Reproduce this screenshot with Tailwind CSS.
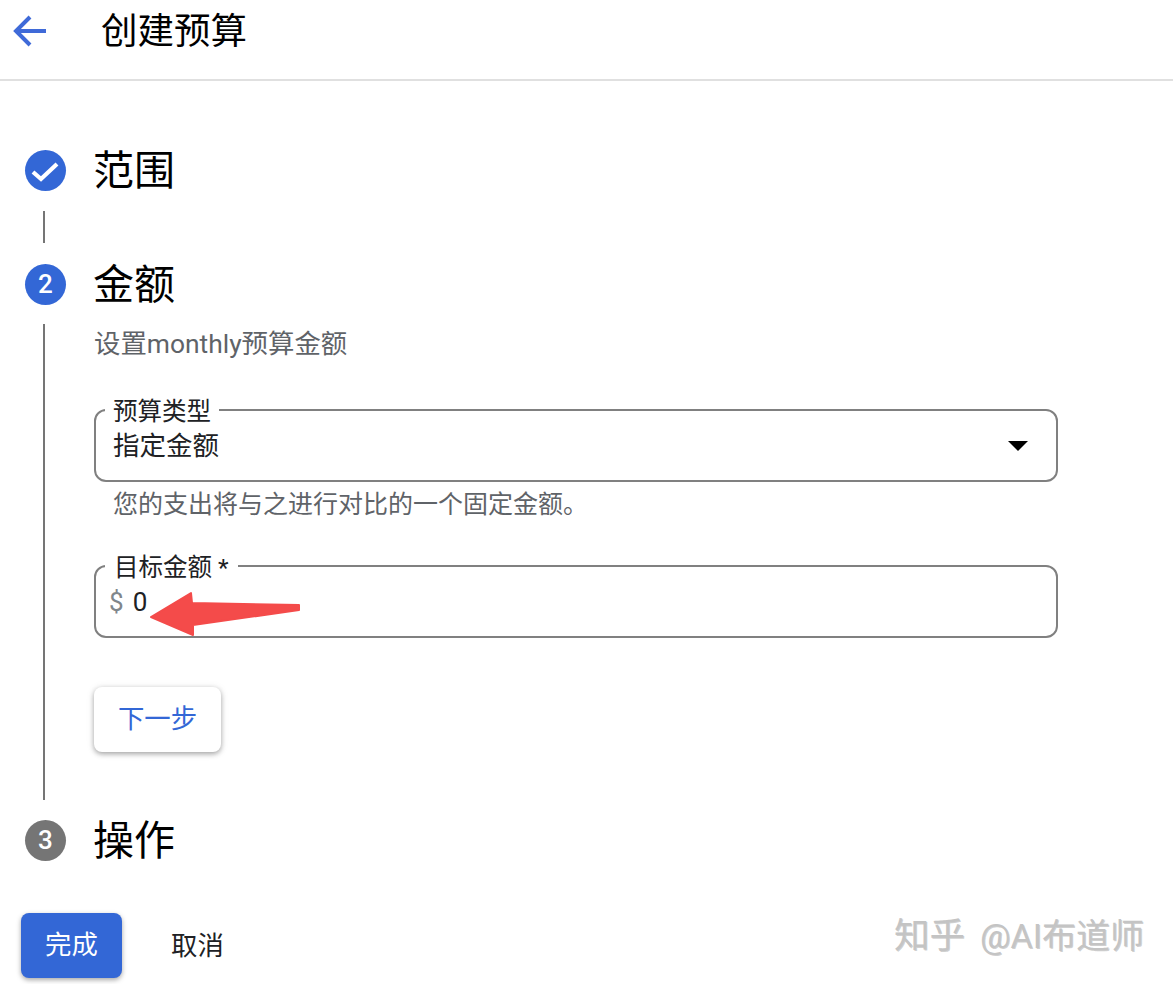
<!DOCTYPE html>
<html lang="zh-CN">
<head>
<meta charset="utf-8">
<title>创建预算</title>
<script src="https://cdn.jsdelivr.net/npm/@tailwindcss/browser@4"></script>
</head>
<body class="bg-white">
<div class="relative w-[1173px] h-[984px] overflow-hidden bg-white text-black font-['Roboto','Noto_Sans_CJK_SC',sans-serif]">
  <header class="h-[81px] border-b-2 border-[#e0e0e0] flex items-start">
    <svg class="ml-[12px] mt-[13px] w-[36px] h-[36px]" viewBox="0 0 36 36" fill="none" stroke="#3f6ad8" stroke-width="4"><path d="M34 18H5M18 4 4 18l14 14"/></svg>
    <h1 class="ml-[53px] mt-[10px] text-[36.5px] leading-[44px] font-normal">创建预算</h1>
  </header>

  <main class="pt-[69px]">
    <section class="flex items-center h-[41px] pl-[25px]">
      <div class="w-[41px] h-[41px] rounded-full bg-[#3367d6] flex items-center justify-center">
        <svg class="w-[41px] h-[41px]" viewBox="0 0 41 41" fill="none" stroke="#fff" stroke-width="4.2"><path d="M8 22l8 7L32 14"/></svg>
      </div>
      <h2 class="ml-[27px] text-[41px] leading-[48px] font-normal">范围</h2>
    </section>
    <div class="ml-[43px] mt-[20px] w-[2px] h-[32px] bg-[#757575]"></div>

    <section class="mt-[21px] flex items-center h-[41px] pl-[25px]">
      <div class="w-[41px] h-[41px] rounded-full bg-[#3367d6] flex items-center justify-center text-white text-[26px] font-medium">2</div>
      <h2 class="ml-[27px] text-[41px] leading-[48px] font-normal">金额</h2>
    </section>

    <div class="ml-[43px] mt-[19px] flex h-[476px]">
      <div class="w-[2px] h-full bg-[#757575]"></div>
      <div class="ml-[49px] pt-[5px]">
        <p class="text-[26.4px] leading-[30px] text-[#5f6368]">设置monthly预算金额</p>

        <div class="relative mt-[50px] w-[964px] h-[73px] border-2 border-[#808080] rounded-xl flex items-center justify-between pl-[17px] pr-[28px]">
          <span class="absolute left-[9px] top-[-14px] bg-white px-[8px] text-[24.5px] leading-[30px] text-[#202124]">预算类型</span>
          <span class="text-[26.5px] leading-[32px] text-[#202124]">指定金额</span>
          <svg class="w-[20px] h-[10px]" viewBox="0 0 20 10"><path d="M0 0h20L10 10z" fill="#000"/></svg>
        </div>
        <p class="mt-[8px] ml-[19px] text-[25px] leading-[30px] text-[#5f6368]">您的支出将与之进行对比的一个固定金额。</p>

        <div class="relative mt-[45px] w-[964px] h-[73px] border-2 border-[#808080] rounded-xl flex items-center pl-[13px]">
          <span class="absolute left-[9px] top-[-14px] bg-white px-[9px] text-[24.5px] leading-[30px] text-[#202124]">目标金额 *</span>
          <span class="text-[26px] leading-[32px] text-[#80868b]">$</span>
          <span class="ml-[9px] text-[26px] leading-[32px] text-[#202124]">0</span>
        </div>

        <button class="mt-[49px] w-[127px] h-[65px] rounded-lg bg-white text-[#3367d6] text-[26.4px] shadow-[0_2px_5px_rgba(0,0,0,0.3),0_1px_8px_rgba(0,0,0,0.1)]">下一步</button>
      </div>
    </div>

    <section class="mt-[20px] flex items-center h-[41px] pl-[25px]">
      <div class="w-[41px] h-[41px] rounded-full bg-[#757575] flex items-center justify-center text-white text-[26px] font-medium">3</div>
      <h2 class="ml-[27px] text-[41px] leading-[48px] font-normal">操作</h2>
    </section>

    <footer class="mt-[52px] pl-[21px] flex items-center">
      <button class="w-[101px] h-[65px] rounded-lg bg-[#3367d6] text-white text-[26.4px] shadow-[0_2px_5px_rgba(0,0,0,0.35)]">完成</button>
      <button class="ml-[49px] text-[26.4px] leading-[32px] text-[#202124]">取消</button>
    </footer>
  </main>

  <svg class="absolute left-[149px] top-[590px] w-[153px] h-[48px]" viewBox="149 590 153 48"><path d="M151 617 191 593 192 603 299 605 299 610 193 625 193 635Z" fill="#f44b4a" stroke="#f44b4a" stroke-width="2" stroke-linejoin="round"/></svg>

  <div class="absolute left-[894px] top-[914px] flex items-center h-[44px] text-[#c4c4c4] [text-shadow:1px_1px_0_rgba(120,120,120,0.35)] whitespace-nowrap">
    <span class="text-[35.5px] leading-[44px]">知乎</span>
    <span class="ml-[15px] text-[34px] leading-[44px]">@AI布道师</span>
  </div>
</div>
</body>
</html>
